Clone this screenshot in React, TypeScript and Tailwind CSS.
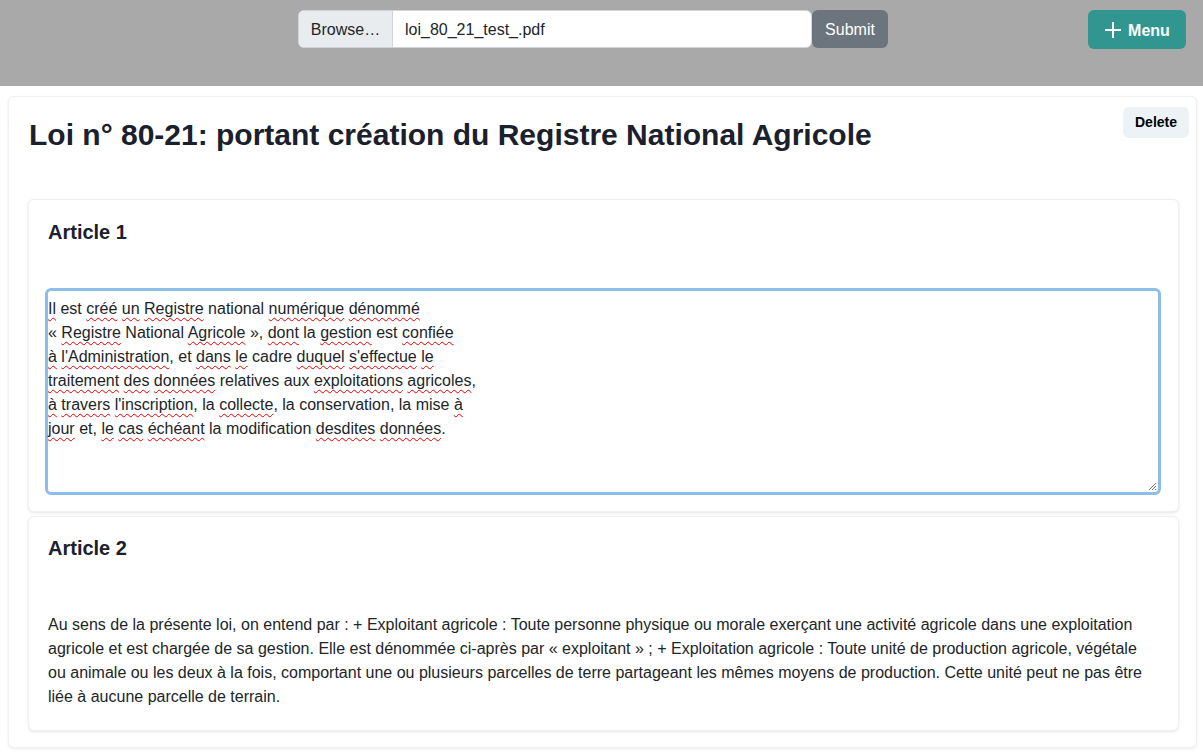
import React from "react";

const lines: [string, boolean][][] = [
  [["Il", true], [" est ", false], ["créé", true], [" ", false], ["un", true], [" ", false], ["Registre", true], [" national ", false], ["numérique", true], [" ", false], ["dénommé", true]],
  [["« ", false], ["Registre", true], [" National ", false], ["Agricole", true], [" », ", false], ["dont", true], [" la ", false], ["gestion", true], [" est ", false], ["confiée", true]],
  [["à", true], [" ", false], ["l'Administration", true], [", et ", false], ["dans", true], [" ", false], ["le", true], [" cadre ", false], ["duquel", true], [" ", false], ["s'effectue", true], [" ", false], ["le", true]],
  [["traitement", true], [" ", false], ["des", true], [" ", false], ["données", true], [" relatives aux ", false], ["exploitations", true], [" ", false], ["agricoles", true], [",", false]],
  [["à", true], [" ", false], ["travers", true], [" ", false], ["l'inscription", true], [", la ", false], ["collecte", true], [", la conservation, la mise ", false], ["à", true]],
  [["jour", true], [" et, ", false], ["le", true], [" ", false], ["cas", true], [" ", false], ["échéant", true], [" la modification ", false], ["desdites", true], [" ", false], ["données", true], [".", false]],
];

export default function App() {
  return (
    <div className="min-h-[752px] bg-white text-[#212529]" style={{ fontFamily: '"Liberation Sans", Arial, sans-serif' }}>
      <header className="relative h-[86px] bg-[#a9a9a9]">
        <div className="absolute left-[298px] top-[10px] flex h-[38px]">
          <div className="flex w-[514px] overflow-hidden rounded-[6px] border border-[#ced4da] bg-white">
            <div className="flex w-[94px] items-center justify-center border-r border-[#ced4da] bg-[#e9ecef] pt-[2px] text-[16px]">Browse…</div>
            <div className="flex items-center pl-[12px] pt-[2px] text-[16px]">loi_80_21_test_.pdf</div>
          </div>
          <button className="flex w-[76px] items-center justify-center rounded-[6px] bg-[#6c757d] pt-[2px] text-[16px] text-white">Submit</button>
        </div>
        <button className="absolute right-[17px] top-[10px] flex h-[39px] w-[98px] items-center justify-center gap-[6px] rounded-[6px] bg-[#31968f] pt-[2px] text-[16px] font-bold text-white">
          <svg width="18" height="18" viewBox="0 0 18 18" className="-mt-[2px]"><path d="M9 1v16M1 9h16" stroke="white" strokeWidth="2" /></svg>
          Menu
        </button>
      </header>
      <div className="ml-[8px] mr-[6px] mt-[10px] rounded-[6px] border border-[#f0f0f0] bg-white pb-[16px] pl-[19px] pr-[17px] shadow-[0_1px_3px_rgba(0,0,0,0.08)]">
        <div className="flex items-start justify-between pt-[10px]">
          <h1 className="ml-[1px] mt-[10px] text-[30px] font-bold leading-[36px] text-[#1a202c]">Loi n° 80-21: portant création du Registre National Agricole</h1>
          <button className="-mr-[10px] h-[31px] w-[66px] rounded-[6px] bg-[#edf2f7] text-[14px] font-bold text-black">Delete</button>
        </div>
        <div className="mt-[46px] flex flex-col gap-[4px]">
          <div className="rounded-[6px] border border-[#f0f0f0] bg-white px-[19px] pb-[16px] pt-[18px] shadow-[0_1px_3px_rgba(0,0,0,0.1)]">
            <h2 className="text-[20px] font-bold leading-[28px] text-[#1a202c]">Article 1</h2>
            <div className="relative -ml-[3px] -mr-[2px] mt-[42px] h-[207px] rounded-[6px] border-[3px] border-[#8fbde9] pt-[6px] text-[16px] leading-[24px]">
              {lines.map((ln, i) => (
                <div key={i} className="whitespace-pre">
                  {ln.map(([t, u], j) =>
                    u ? (
                      <span key={j} className="underline decoration-[#e00000] decoration-wavy decoration-[1px] underline-offset-[3px]">{t}</span>
                    ) : (
                      <span key={j}>{t}</span>
                    )
                  )}
                </div>
              ))}
              <svg className="absolute bottom-[1px] right-[1px]" width="10" height="10" viewBox="0 0 10 10">
                <path d="M9 2L2 9M9 5L5 9M9 8L8 9" stroke="#777" strokeWidth="1" />
              </svg>
            </div>
          </div>
          <div className="rounded-[6px] border border-[#f0f0f0] bg-white px-[19px] pb-[21px] pt-[17px] shadow-[0_1px_3px_rgba(0,0,0,0.1)]">
            <h2 className="text-[20px] font-bold leading-[28px] text-[#1a202c]">Article 2</h2>
            <p className="mt-[51px] text-[16px] leading-[24px]">
              Au sens de la présente loi, on entend par : + Exploitant agricole : Toute personne physique ou morale exerçant une activité agricole dans une exploitation agricole et est chargée de sa gestion. Elle est dénommée ci-après par « exploitant » ; + Exploitation agricole : Toute unité de production agricole, végétale ou animale ou les deux à la fois, comportant une ou plusieurs parcelles de terre partageant les mêmes moyens de production. Cette unité peut ne pas être liée à aucune parcelle de terrain.
            </p>
          </div>
        </div>
      </div>
    </div>
  );
}
